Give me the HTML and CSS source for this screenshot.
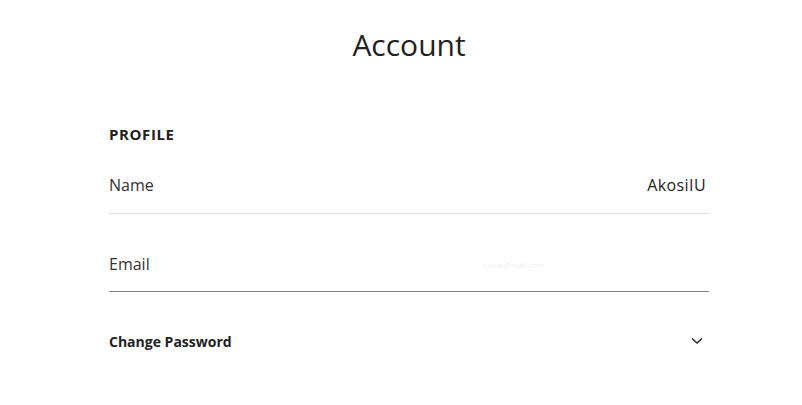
FILE: index.html
```html
<!DOCTYPE html>
<html lang="en">
<head>
<title>Account</title>
<meta charset="utf-8">
<meta name="viewport" content="width=device-width, initial-scale=1">
<link rel="stylesheet" href="styles.css">
</head>
<body>

<header class="page-head">
  <h1>Account</h1>
</header>

<section class="account">
  <h2 class="section-title">PROFILE</h2>

  <div class="field">
    <span class="label">Name</span>
    <span class="value">AkosiIU</span>
  </div>

  <div class="field field-email">
    <span class="label">Email</span>
    <span class="hidden-value">name@mail.com</span>
  </div>

  <div class="toggle-row">
    <span class="toggle-label">Change Password</span>
    <svg class="chevron" width="12" height="8" viewBox="0 0 12 8">
      <path d="M1 1.5 L6 6 L11 1.5" fill="none" stroke="#3a2a30" stroke-width="1.6"/>
    </svg>
  </div>
</section>

</body>
</html>
```

FILE: styles.css
```css
* {
  box-sizing: border-box;
}

body {
  margin: 0;
  padding-left: 16px;
  font-family: "Open Sans", Arial, sans-serif;
  color: #222;
  background: #fff;
}

/* Page title */
.page-head {
  text-align: center;
  padding-top: 24px;
}

.page-head h1 {
  margin: 0;
  font-size: 30px;
  font-weight: 400;
  line-height: 42px;
  color: #222;
}

.account {
  width: 600px;
  margin: 58px auto 0;
}

.section-title {
  margin: 0;
  font-size: 15px;
  font-weight: 700;
  letter-spacing: 0.6px;
  line-height: 20px;
  color: #222;
}

/* Profile rows */
.field {
  display: flex;
  justify-content: space-between;
  align-items: center;
  height: 70px;
  padding-top: 13px;
  border-bottom: 1px solid #ddd;
  font-size: 16px;
  color: #333;
}

.field .value {
  padding-right: 3px;
  letter-spacing: 0.4px;
  color: #222;
}

.field-email {
  height: 78px;
  padding-top: 23px;
  border-bottom-color: #888;
}

/* email is blurred out in the source */
.field .hidden-value {
  margin-right: 164px;
  font-size: 8px;
  color: #f2f2f2;
}

.toggle-row {
  display: flex;
  justify-content: space-between;
  align-items: center;
  height: 60px;
  padding: 38px 6px 0 0;
  font-size: 14px;
  font-weight: 700;
  color: #222;
}

.chevron {
  display: block;
}
```
